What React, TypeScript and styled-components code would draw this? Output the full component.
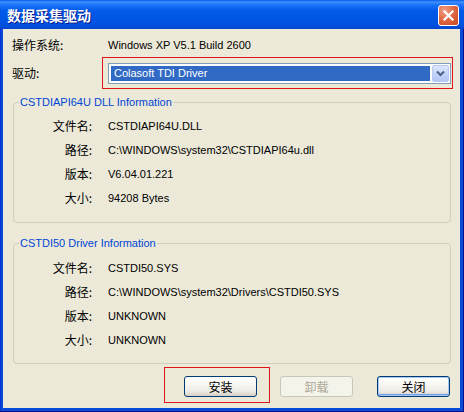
import React from 'react';
import styled, { createGlobalStyle } from 'styled-components';

const Global = createGlobalStyle`
  html, body { margin: 0; padding: 0; background: #ffffff; }
  body { font-family: "Liberation Sans", "Noto Sans CJK SC", sans-serif; }
`;

const LATIN = `"Liberation Sans", "Noto Sans CJK SC", sans-serif`;
const CJK = `"Noto Sans CJK SC", "Liberation Sans", sans-serif`;

const Window = styled.div`
  width: 464px;
  height: 412px;
  box-sizing: border-box;
  display: flex;
  flex-direction: column;
  background: #0a4ad9;
  box-shadow: inset -1px 0 0 #00138c, inset 0 -1px 0 #00138c, inset 1px 0 0 #0831d9;
`;

const TitleBar = styled.div`
  flex: none;
  height: 29px;
  display: flex;
  align-items: center;
  justify-content: space-between;
  padding: 0 5px 0 7px;
  background: linear-gradient(
    to bottom,
    #0a5ae8 0px,
    #3d8ffe 2px,
    #1a72f7 5px,
    #0059e8 11px,
    #0055e4 20px,
    #0050dc 26px,
    #0044cc 29px
  );
`;

const Title = styled.span`
  color: #ffffff;
  font: bold 14px/16px ${CJK};
  text-shadow: 1px 1px 0 #0a1a8a;
  margin-top: 1px;
`;

const CloseButton = styled.div`
  width: 21px;
  height: 21px;
  box-sizing: border-box;
  border: 1px solid #ffffff;
  border-radius: 3px;
  background: radial-gradient(circle at 30% 25%, #f0a184 0%, #e06a45 45%, #c84720 100%);
  display: flex;
  align-items: center;
  justify-content: center;
  margin-top: 1px;
`;

const Body = styled.div`
  flex: 1;
  margin: 0 4px 4px 3px;
  background: #ece9d8;
  padding: 8px 7px 0 9px;
  display: flex;
  flex-direction: column;
`;

const TopGrid = styled.div`
  display: grid;
  grid-template-columns: 90px 1fr;
  grid-template-rows: 16px 32px;
  row-gap: 4px;
  align-items: center;
`;

const Label = styled.span<{ $right?: boolean }>`
  font: 12px/16px ${CJK};
  color: #000000;
  text-align: ${(p) => (p.$right ? 'right' : 'left')};
  white-space: nowrap;
`;

const Value = styled.span<{ $indent?: boolean }>`
  font: 11px/16px ${LATIN};
  color: #000000;
  padding-left: ${(p) => (p.$indent ? '6px' : '0')};
  white-space: nowrap;
`;

const Highlight = styled.div<{ $pad: string }>`
  border: 1px solid #e0141b;
  padding: ${(p) => p.$pad};
  display: flex;
`;

const Combo = styled.div`
  flex: 1;
  height: 21px;
  box-sizing: border-box;
  border: 1px solid #7f9db9;
  background: #ffffff;
  display: flex;
  align-items: center;
  padding: 1px;
`;

const ComboSelected = styled.div`
  flex: 1;
  height: 15px;
  margin-left: 1px;
  background: #316ac5;
  color: #ffffff;
  font: 11px/15px ${LATIN};
  padding-left: 3px;
`;

const ComboArrow = styled.div`
  width: 17px;
  height: 17px;
  margin-left: 2px;
  box-sizing: border-box;
  border: 1px solid #b6c9f3;
  border-radius: 2px;
  background: linear-gradient(to bottom, #dce7fd 0%, #c4d5fb 50%, #b3c7f5 100%);
  display: flex;
  align-items: center;
  justify-content: center;
`;

const Group = styled.fieldset<{ $top: number; $padTop: number; $padBottom: number }>`
  margin: ${(p) => p.$top}px 2px 0 1px;
  padding: ${(p) => p.$padTop}px 0 ${(p) => p.$padBottom}px 0;
  border: 1px solid #d0d0bf;
  border-radius: 4px;
  min-width: 0;
`;

const Legend = styled.legend`
  margin-left: 5px;
  padding: 0 1px;
  color: #0046d5;
  font: 11px/14px ${LATIN};
`;

const InfoGrid = styled.div`
  display: grid;
  grid-template-columns: 78px 1fr;
  grid-auto-rows: 24px;
  column-gap: 16px;
  align-items: center;
`;

const ButtonRow = styled.div`
  display: flex;
  justify-content: flex-end;
  align-items: flex-start;
  margin-top: 3px;
  padding-right: 3px;
`;

const Button = styled.div<{ $disabled?: boolean; $default?: boolean; $gap?: number }>`
  width: 73px;
  height: 21px;
  box-sizing: border-box;
  margin-top: ${(p) => (p.$gap !== undefined ? '9px' : '0')};
  margin-left: ${(p) => (p.$gap !== undefined ? `${p.$gap}px` : '0')};
  border: 1px solid ${(p) => (p.$disabled ? '#c9c7ba' : '#003c74')};
  border-radius: 3px;
  background: ${(p) =>
    p.$disabled
      ? '#f5f4ea'
      : 'linear-gradient(to bottom, #ffffff 0%, #f7f6f2 40%, #ecebe5 75%, #d6d0c5 100%)'};
  box-shadow: ${(p) =>
    p.$default ? 'inset 0 0 0 1px #a9c8f5, inset 0 -1px 0 1px #6b9cea' : 'none'};
  color: ${(p) => (p.$disabled ? '#aca899' : '#000000')};
  font: 12px/19px ${CJK};
  text-align: center;
`;

const dllRows: [string, string][] = [
  ['文件名:', 'CSTDIAPI64U.DLL'],
  ['路径:', 'C:\\WINDOWS\\system32\\CSTDIAPI64u.dll'],
  ['版本:', 'V6.04.01.221'],
  ['大小:', '94208 Bytes'],
];

const sysRows: [string, string][] = [
  ['文件名:', 'CSTDI50.SYS'],
  ['路径:', 'C:\\WINDOWS\\system32\\Drivers\\CSTDI50.SYS'],
  ['版本:', 'UNKNOWN'],
  ['大小:', 'UNKNOWN'],
];

function InfoGroup({
  title,
  rows,
  top,
  padTop,
  padBottom,
}: {
  title: string;
  rows: [string, string][];
  top: number;
  padTop: number;
  padBottom: number;
}) {
  return (
    <Group $top={top} $padTop={padTop} $padBottom={padBottom}>
      <Legend>{title}</Legend>
      <InfoGrid>
        {rows.map(([k, v]) => (
          <React.Fragment key={k}>
            <Label $right>{k}</Label>
            <Value>{v}</Value>
          </React.Fragment>
        ))}
      </InfoGrid>
    </Group>
  );
}

export default function App() {
  return (
    <>
      <Global />
      <Window>
        <TitleBar>
          <Title>数据采集驱动</Title>
          <CloseButton>
            <svg width="13" height="13" viewBox="0 0 13 13">
              <path d="M2.5 2.5 L10.5 10.5 M10.5 2.5 L2.5 10.5" stroke="#ffffff" strokeWidth="2.2" strokeLinecap="square" />
            </svg>
          </CloseButton>
        </TitleBar>
        <Body>
          <TopGrid>
            <Label>操作系统:</Label>
            <Value $indent>Windows XP V5.1 Build 2600</Value>
            <Label>驱动:</Label>
            <Highlight $pad="5px 1px 4px 5px">
              <Combo>
                <ComboSelected>Colasoft TDI Driver</ComboSelected>
                <ComboArrow>
                  <svg width="9" height="7" viewBox="0 0 9 7">
                    <path d="M1 1.5 L4.5 5 L8 1.5" fill="none" stroke="#4d6185" strokeWidth="2" />
                  </svg>
                </ComboArrow>
              </Combo>
            </Highlight>
          </TopGrid>
          <InfoGroup title="CSTDIAPI64U DLL Information" rows={dllRows} top={6} padTop={5} padBottom={12} />
          <InfoGroup title="CSTDI50 Driver Information" rows={sysRows} top={13} padTop={6} padBottom={11} />
          <ButtonRow>
            <Highlight $pad="8px 12px 5px 19px">
              <Button>安装</Button>
            </Highlight>
            <Button $disabled $gap={10}>卸载</Button>
            <Button $default $gap={24}>关闭</Button>
          </ButtonRow>
        </Body>
      </Window>
    </>
  );
}
